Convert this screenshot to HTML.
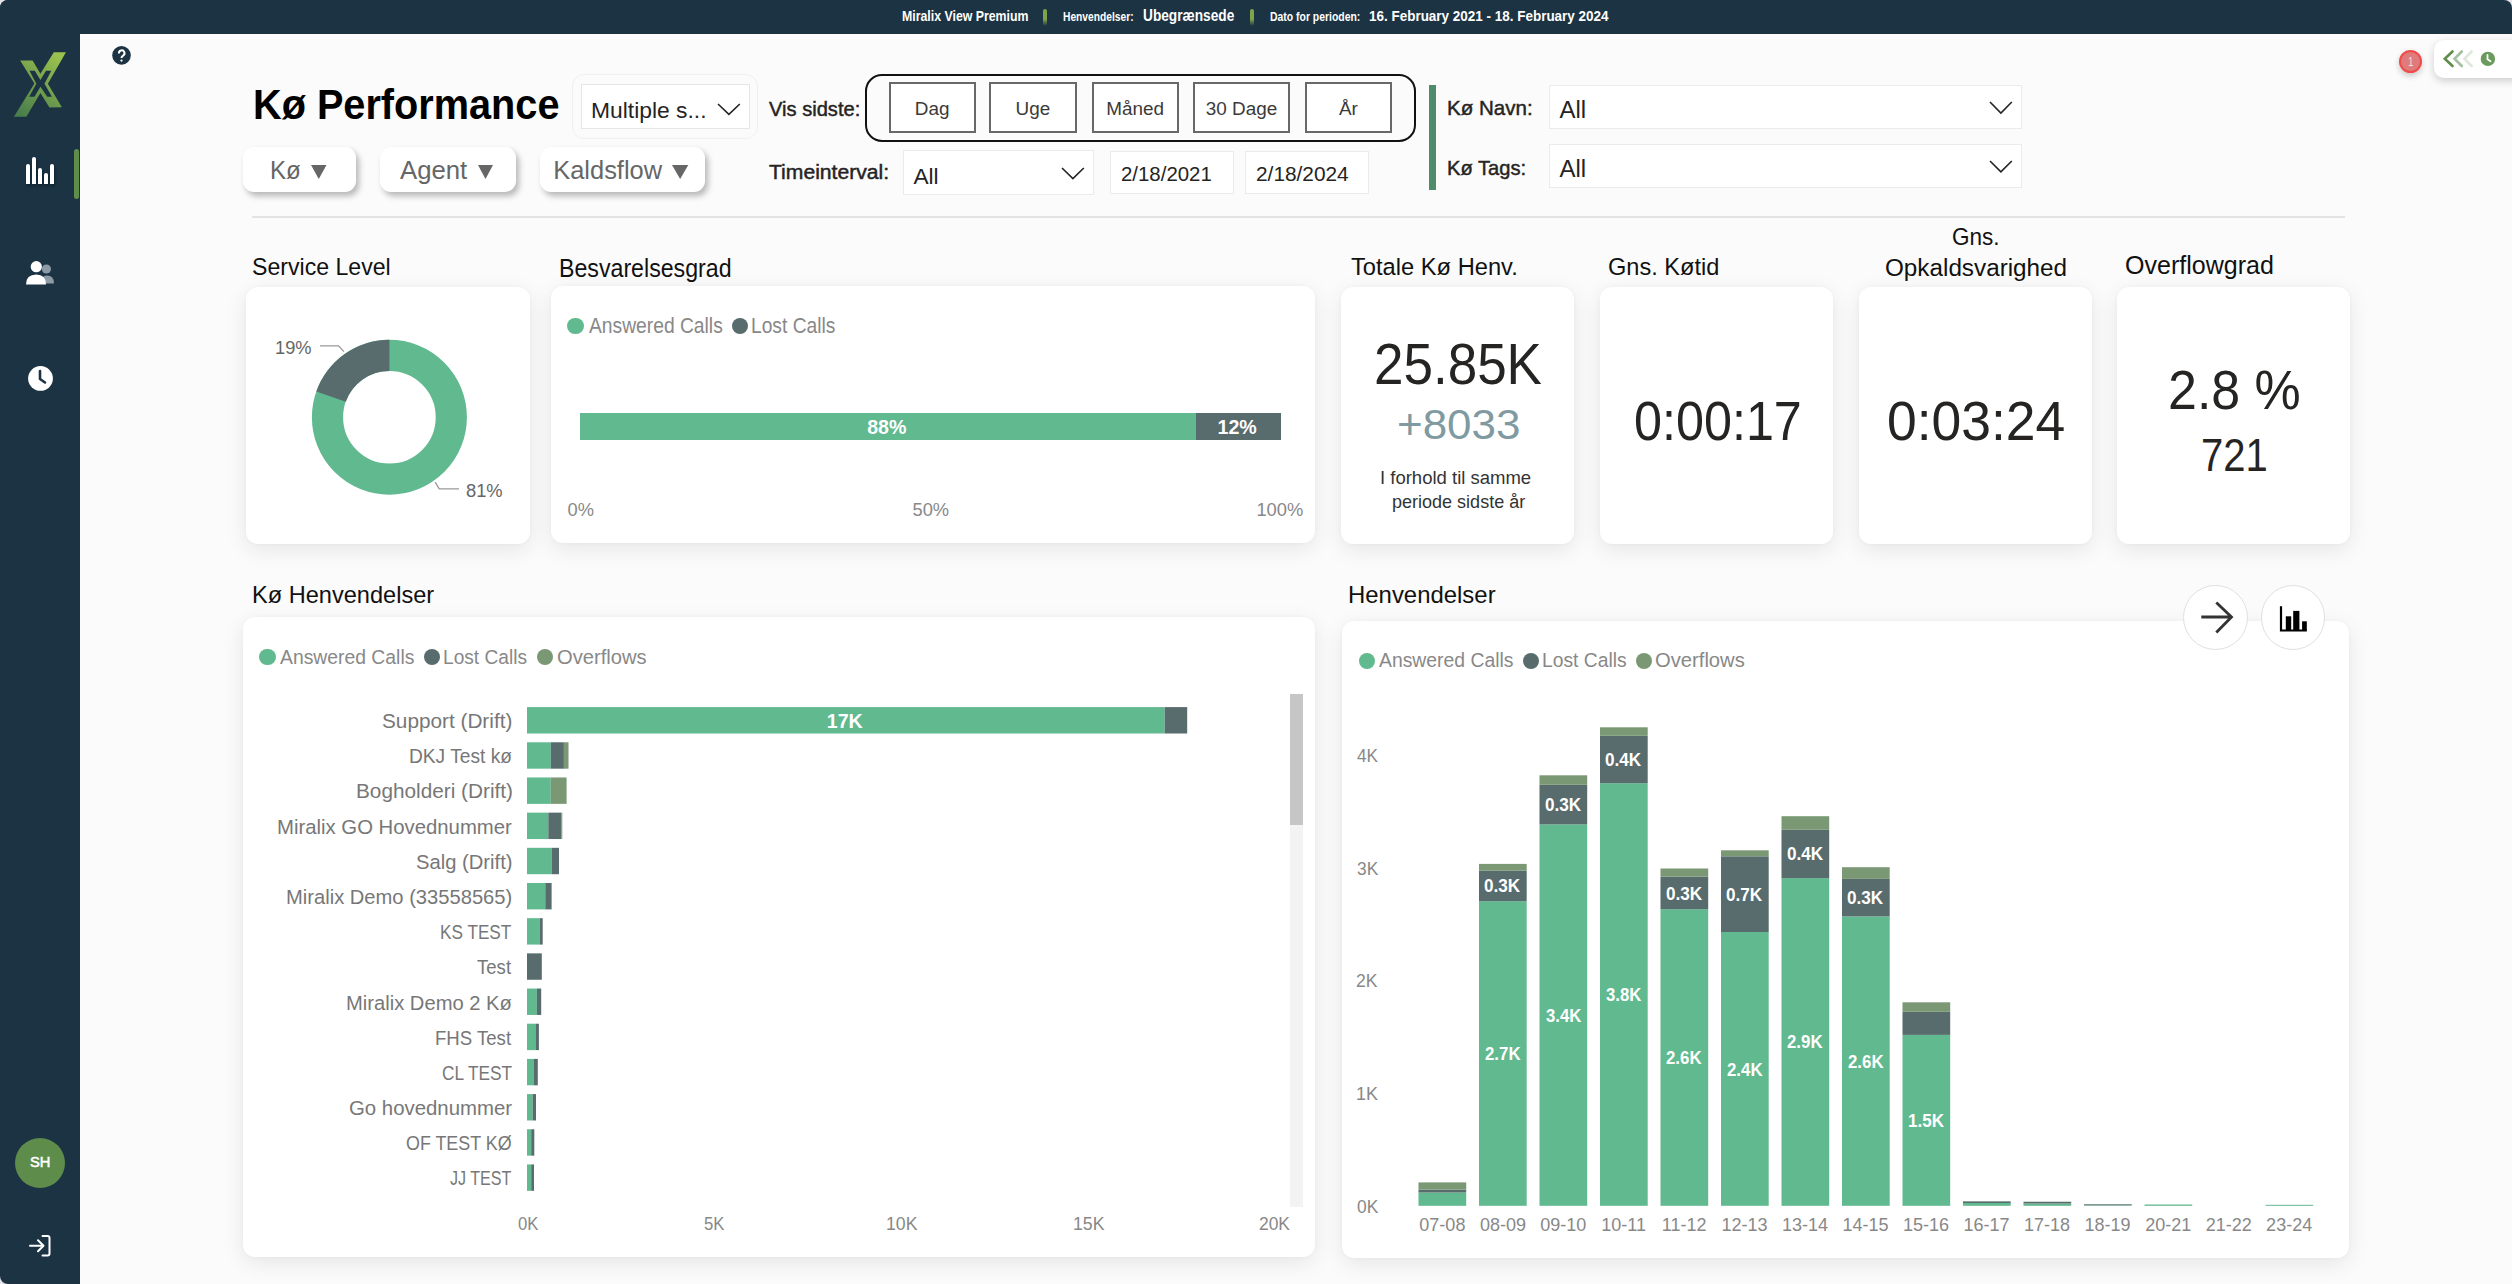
<!DOCTYPE html><html><head><meta charset="utf-8"><style>
html,body{margin:0;padding:0;}
body{width:2512px;height:1284px;position:relative;overflow:hidden;background:#e4e4e6;font-family:"Liberation Sans",sans-serif;}
.t{position:absolute;white-space:nowrap;line-height:1;transform-origin:0 0;z-index:2;}
.r{position:absolute;box-sizing:border-box;}
svg{position:absolute;overflow:visible;}
</style></head><body>
<div class="r" style="left:80.00px;top:34.00px;width:2432.00px;height:1250.00px;background:#fbfbfb;"></div>
<div class="r" style="left:0.00px;top:0.00px;width:2512.00px;height:34.00px;background:#1c3343;border-radius:8px 8px 0 0;"></div>
<div class="r" style="left:0.00px;top:0.00px;width:80.00px;height:1284.00px;background:#1c3343;border-radius:8px 0 0 8px;"></div>
<div class="t" style="left:902.17px;top:10.00px;font-size:13.81px;font-weight:bold;color:#fff;transform:scaleX(0.8932);">Miralix View Premium</div>
<div class="r" style="left:1043.00px;top:9.00px;width:4.00px;height:17.00px;background:linear-gradient(#7fa24a,#7fa24a 60%,rgba(127,162,74,0));border-radius:2px;"></div>
<div class="t" style="left:1063.31px;top:11.20px;font-size:12.35px;font-weight:bold;color:#fff;transform:scaleX(0.8300);">Henvendelser:</div>
<div class="t" style="left:1143.18px;top:8.00px;font-size:15.99px;font-weight:bold;color:#fff;transform:scaleX(0.8563);">Ubegrænsede</div>
<div class="r" style="left:1250.00px;top:9.00px;width:4.00px;height:17.00px;background:linear-gradient(#7fa24a,#7fa24a 60%,rgba(127,162,74,0));border-radius:2px;"></div>
<div class="t" style="left:1269.60px;top:11.20px;font-size:12.35px;font-weight:bold;color:#fff;transform:scaleX(0.8442);">Dato for perioden:</div>
<div class="t" style="left:1368.95px;top:8.20px;font-size:15.41px;font-weight:bold;color:#fff;transform:scaleX(0.8740);">16. February 2021 - 18. February 2024</div>
<svg style="left:8px;top:45px" width="64" height="80" viewBox="0 0 1027 1284">
<defs><linearGradient id="lg" x1="0.8" y1="0" x2="0.2" y2="1"><stop offset="0" stop-color="#9cc24e"/><stop offset="1" stop-color="#4a7f4c"/></linearGradient></defs>
<path fill="url(#lg)" fill-rule="evenodd" d="M195 250 L395 250 L520 460 L735 115 L930 115 L640 620 L865 1000 L665 1005 L520 770 L295 1150 L95 1150 L424 618 Z
M345 415 L430 415 L520 560 L610 415 L695 415 L585 620 L705 830 L630 830 L520 670 L425 830 L340 830 L455 620 Z"/></svg>
<div class="r" style="left:26.00px;top:163.80px;width:4.00px;height:20.20px;background:#fff;border-radius:2px 2px 0 0;box-shadow:1px 2px 3px rgba(0,0,0,0.35);"></div>
<div class="r" style="left:32.00px;top:157.00px;width:4.00px;height:27.00px;background:#fff;border-radius:2px 2px 0 0;box-shadow:1px 2px 3px rgba(0,0,0,0.35);"></div>
<div class="r" style="left:38.00px;top:167.80px;width:4.00px;height:16.20px;background:#fff;border-radius:2px 2px 0 0;box-shadow:1px 2px 3px rgba(0,0,0,0.35);"></div>
<div class="r" style="left:44.00px;top:172.90px;width:4.00px;height:11.10px;background:#fff;border-radius:2px 2px 0 0;box-shadow:1px 2px 3px rgba(0,0,0,0.35);"></div>
<div class="r" style="left:50.00px;top:163.80px;width:4.00px;height:20.20px;background:#fff;border-radius:2px 2px 0 0;box-shadow:1px 2px 3px rgba(0,0,0,0.35);"></div>
<div class="r" style="left:74.00px;top:149.00px;width:5.00px;height:50.00px;background:#5e8e4a;border-radius:3px;"></div>
<svg style="left:20px;top:255px" width="40" height="35" viewBox="0 0 40 35">
<circle cx="26.4" cy="14" r="4.6" fill="#8c9ba5"/>
<path d="M21 28.5 Q21 20.5 27 20.5 Q34 20.5 34 28.5 Z" fill="#8c9ba5"/>
<circle cx="16.3" cy="11.7" r="5.6" fill="#fff"/>
<path d="M6 29.5 Q6 19.5 16.3 19.5 Q26 19.5 26 29.5 Z" fill="#fff"/>
</svg>
<svg style="left:20px;top:358px" width="40" height="40" viewBox="0 0 40 40">
<circle cx="20.5" cy="20.4" r="12.4" fill="#fff"/>
<path d="M20 13 L20 21 L25 24.5" stroke="#1c3343" stroke-width="2.6" fill="none" stroke-linecap="round" stroke-linejoin="round"/>
</svg>
<div class="r" style="left:15px;top:1138px;width:50px;height:50px;border-radius:50%;background:#5e8d4b;"></div>
<div class="t" style="left:30.04px;top:1155.00px;font-size:14.53px;font-weight:normal;color:#fff;transform:scaleX(1.0132);-webkit-text-stroke:0.5px #fff;">SH</div>
<svg style="left:26px;top:1232px" width="30" height="28" viewBox="0 0 30 28">
<path d="M4 13.8 L17.5 13.8 M12 8.3 L17.5 13.8 L12 19.3" stroke="#fff" stroke-width="2" fill="none" stroke-linecap="round" stroke-linejoin="round"/>
<path d="M16.5 4 L21.5 4 Q23.5 4 23.5 6 L23.5 21.5 Q23.5 23.5 21.5 23.5 L16.5 23.5" stroke="#fff" stroke-width="2" fill="none" stroke-linecap="round"/>
</svg>
<svg style="left:100px;top:35px" width="50" height="40" viewBox="100 35 50 40">
<circle cx="121.5" cy="55.4" r="9.3" fill="#1c3343"/>
<path d="M118.9 53.5 A2.8 2.8 0 1 1 123.1 55.6 Q121.5 56.5 121.5 57.9" stroke="#fff" stroke-width="2" fill="none"/>
<circle cx="121.5" cy="60.6" r="1.15" fill="#fff"/>
</svg>
<div class="r" style="left:2399px;top:50.3px;width:23px;height:23px;border-radius:50%;background:#e07b7b;border:2px solid #f04a4a;box-shadow:0 3px 6px rgba(0,0,0,0.2);"></div>
<div class="t" style="left:2407.96px;top:54.80px;font-size:13.66px;font-weight:normal;color:#f8dede;transform:scaleX(0.7132);">1</div>
<div class="r" style="left:2434.00px;top:40.00px;width:100.00px;height:37.50px;background:#fff;border-radius:10px;box-shadow:0 3px 8px rgba(0,0,0,0.18);"></div>
<svg style="left:2440px;top:48px" width="60" height="22" viewBox="0 0 60 22">
<path d="M12.5 3.5 L4.8 10.8 L12.5 18" stroke="#5e8e4a" stroke-width="2.6" fill="none" stroke-linecap="round"/>
<path d="M21.8 3.5 L14.5 10.8 L21.8 18" stroke="#a3c0a0" stroke-width="2.6" fill="none" stroke-linecap="round"/>
<path d="M31.6 3.5 L24.5 10.8 L31.6 18" stroke="#dce8da" stroke-width="2.6" fill="none" stroke-linecap="round"/>
<circle cx="47.9" cy="10.9" r="7.2" fill="#6a9a5c"/>
<path d="M47.5 6.8 L47.5 11.2 L50.5 13.2" stroke="#fff" stroke-width="1.8" fill="none" stroke-linecap="round"/>
</svg>
<div class="t" style="left:252.84px;top:83.70px;font-size:42.15px;font-weight:bold;color:#000;transform:scaleX(0.9414);">Kø Performance</div>
<div class="r" style="left:572.00px;top:74.00px;width:186.00px;height:65.00px;border:1px solid #f0f0f0;border-radius:12px;"></div>
<div class="r" style="left:581.20px;top:84.20px;width:168.70px;height:45.30px;background:#fff;border:1.5px solid #e6e6e6;"></div>
<div class="t" style="left:590.82px;top:98.50px;font-size:22.67px;font-weight:normal;color:#252423;transform:scaleX(1.0087);">Multiple s...</div>
<svg style="left:715.50px;top:101.50px" width="25.80" height="14.30"><path d="M2 2 L12.90 12.30 L23.80 2" stroke="#252423" stroke-width="1.6" fill="none"/></svg>
<div class="t" style="left:768.52px;top:99.30px;font-size:20.35px;font-weight:normal;color:#252423;transform:scaleX(0.9886);-webkit-text-stroke:0.45px #252423;">Vis sidste:</div>
<div class="r" style="left:865.00px;top:74.20px;width:550.50px;height:68.30px;border:2px solid #111;border-radius:17px;"></div>
<div class="r" style="left:888.50px;top:82.30px;width:87.70px;height:50.50px;background:#fff;border:2px solid #6a6866;"></div>
<div class="t" style="left:914.85px;top:100.00px;font-size:18.90px;font-weight:normal;color:#3b3a39;">Dag</div>
<div class="r" style="left:989.40px;top:82.30px;width:87.60px;height:50.50px;background:#fff;border:2px solid #6a6866;"></div>
<div class="t" style="left:1015.56px;top:100.00px;font-size:18.90px;font-weight:normal;color:#3b3a39;">Uge</div>
<div class="r" style="left:1091.70px;top:82.30px;width:87.30px;height:50.50px;background:#fff;border:2px solid #6a6866;"></div>
<div class="t" style="left:1106.30px;top:100.00px;font-size:18.90px;font-weight:normal;color:#3b3a39;">Måned</div>
<div class="r" style="left:1192.80px;top:82.30px;width:97.40px;height:50.50px;background:#fff;border:2px solid #6a6866;"></div>
<div class="t" style="left:1205.84px;top:100.00px;font-size:18.90px;font-weight:normal;color:#3b3a39;">30 Dage</div>
<div class="r" style="left:1304.50px;top:82.30px;width:87.40px;height:50.50px;background:#fff;border:2px solid #6a6866;"></div>
<div class="t" style="left:1338.88px;top:100.00px;font-size:18.90px;font-weight:normal;color:#3b3a39;">År</div>
<div class="r" style="left:1429.00px;top:85.20px;width:6.80px;height:104.50px;background:#4e8c6c;"></div>
<div class="t" style="left:1446.71px;top:98.40px;font-size:20.93px;font-weight:normal;color:#252423;transform:scaleX(0.9819);-webkit-text-stroke:0.45px #252423;">Kø Navn:</div>
<div class="r" style="left:1549.30px;top:84.60px;width:472.50px;height:44.20px;background:#fff;border:1.5px solid #ebebeb;"></div>
<div class="t" style="left:1559.45px;top:98.00px;font-size:23.98px;font-weight:normal;color:#252423;">All</div>
<svg style="left:1988.00px;top:99.80px" width="25.80" height="15.10"><path d="M2 2 L12.90 13.10 L23.80 2" stroke="#252423" stroke-width="1.6" fill="none"/></svg>
<div class="t" style="left:1446.75px;top:158.10px;font-size:20.93px;font-weight:normal;color:#252423;transform:scaleX(0.9619);-webkit-text-stroke:0.45px #252423;">Kø Tags:</div>
<div class="r" style="left:1549.30px;top:143.70px;width:472.50px;height:44.20px;background:#fff;border:1.5px solid #ebebeb;"></div>
<div class="t" style="left:1559.45px;top:157.20px;font-size:23.98px;font-weight:normal;color:#252423;">All</div>
<svg style="left:1988.00px;top:159.20px" width="25.80" height="14.90"><path d="M2 2 L12.90 12.90 L23.80 2" stroke="#252423" stroke-width="1.6" fill="none"/></svg>
<div class="r" style="left:243.40px;top:147.40px;width:113.00px;height:45.00px;background:#fff;border-radius:11px;box-shadow:3px 4px 6px rgba(0,0,0,0.28);"></div>
<div class="t" style="left:270.22px;top:157.80px;font-size:25.44px;font-weight:normal;color:#666666;transform:scaleX(0.9485);">Kø</div>
<svg style="left:310.70px;top:165px" width="15.50" height="14"><path d="M0 0 L15.50 0 L7.75 14 Z" fill="#666"/></svg>
<div class="r" style="left:380.30px;top:147.40px;width:135.30px;height:45.00px;background:#fff;border-radius:11px;box-shadow:3px 4px 6px rgba(0,0,0,0.28);"></div>
<div class="t" style="left:399.95px;top:157.80px;font-size:25.44px;font-weight:normal;color:#666666;transform:scaleX(1.0115);">Agent</div>
<svg style="left:478.00px;top:165px" width="15.00" height="14"><path d="M0 0 L15.00 0 L7.50 14 Z" fill="#666"/></svg>
<div class="r" style="left:540.30px;top:147.40px;width:164.50px;height:45.00px;background:#fff;border-radius:11px;box-shadow:3px 4px 6px rgba(0,0,0,0.28);"></div>
<div class="t" style="left:553.22px;top:157.80px;font-size:25.44px;font-weight:normal;color:#666666;">Kaldsflow</div>
<svg style="left:672.00px;top:165px" width="16.30" height="14"><path d="M0 0 L16.30 0 L8.15 14 Z" fill="#666"/></svg>
<div class="t" style="left:768.84px;top:162.00px;font-size:20.35px;font-weight:normal;color:#252423;transform:scaleX(1.0386);-webkit-text-stroke:0.45px #252423;">Timeinterval:</div>
<div class="r" style="left:903.20px;top:150.10px;width:190.40px;height:44.90px;background:#fff;border:1.5px solid #ebebeb;"></div>
<div class="t" style="left:913.45px;top:164.90px;font-size:22.67px;font-weight:normal;color:#252423;">All</div>
<svg style="left:1060.00px;top:166.40px" width="25.80" height="14.60"><path d="M2 2 L12.90 12.60 L23.80 2" stroke="#252423" stroke-width="1.6" fill="none"/></svg>
<div class="r" style="left:1110.10px;top:151.30px;width:124.30px;height:42.90px;background:#fff;border:1.5px solid #ebebeb;"></div>
<div class="t" style="left:1121.18px;top:165.00px;font-size:19.91px;font-weight:normal;color:#252423;transform:scaleX(1.0252);">2/18/2021</div>
<div class="r" style="left:1245.10px;top:151.30px;width:124.40px;height:42.90px;background:#fff;border:1.5px solid #ebebeb;"></div>
<div class="t" style="left:1256.36px;top:165.00px;font-size:19.91px;font-weight:normal;color:#252423;transform:scaleX(1.0469);">2/18/2024</div>
<div class="r" style="left:252.00px;top:216.00px;width:2092.50px;height:1.60px;background:#e3e3e3;"></div>
<div class="t" style="left:252.36px;top:255.00px;font-size:24.71px;font-weight:normal;color:#111111;transform:scaleX(0.9357);">Service Level</div>
<div class="t" style="left:558.50px;top:255.60px;font-size:25.15px;font-weight:normal;color:#111111;transform:scaleX(0.9215);">Besvarelsesgrad</div>
<div class="t" style="left:1351.48px;top:255.00px;font-size:24.13px;font-weight:normal;color:#111111;transform:scaleX(0.9818);">Totale Kø Henv.</div>
<div class="t" style="left:1608.12px;top:255.00px;font-size:24.13px;font-weight:normal;color:#111111;transform:scaleX(0.9766);">Gns. Køtid</div>
<div class="t" style="left:1952.17px;top:226.20px;font-size:23.11px;font-weight:normal;color:#111111;transform:scaleX(0.9747);">Gns.</div>
<div class="t" style="left:1884.56px;top:256.10px;font-size:24.56px;font-weight:normal;color:#111111;transform:scaleX(0.9884);">Opkaldsvarighed</div>
<div class="t" style="left:2124.92px;top:253.30px;font-size:25.15px;font-weight:normal;color:#111111;transform:scaleX(0.9963);">Overflowgrad</div>
<div class="r" style="left:246.00px;top:287.00px;width:283.50px;height:256.50px;background:#fff;border-radius:12px;box-shadow:0 6px 22px rgba(0,0,0,0.085), 0 0 4px rgba(0,0,0,0.03);"></div>
<div class="r" style="left:551.00px;top:286.00px;width:763.50px;height:256.50px;background:#fff;border-radius:12px;box-shadow:0 6px 22px rgba(0,0,0,0.085), 0 0 4px rgba(0,0,0,0.03);"></div>
<div class="r" style="left:1341.10px;top:287.00px;width:233.00px;height:256.50px;background:#fff;border-radius:12px;box-shadow:0 6px 22px rgba(0,0,0,0.085), 0 0 4px rgba(0,0,0,0.03);"></div>
<div class="r" style="left:1600.00px;top:287.00px;width:233.00px;height:256.50px;background:#fff;border-radius:12px;box-shadow:0 6px 22px rgba(0,0,0,0.085), 0 0 4px rgba(0,0,0,0.03);"></div>
<div class="r" style="left:1859.30px;top:287.00px;width:232.50px;height:256.50px;background:#fff;border-radius:12px;box-shadow:0 6px 22px rgba(0,0,0,0.085), 0 0 4px rgba(0,0,0,0.03);"></div>
<div class="r" style="left:2117.40px;top:287.00px;width:232.50px;height:256.50px;background:#fff;border-radius:12px;box-shadow:0 6px 22px rgba(0,0,0,0.085), 0 0 4px rgba(0,0,0,0.03);"></div>
<svg style="left:0;top:0" width="2512" height="1284" viewBox="0 0 2512 1284">
<circle cx="389.4" cy="417.3" r="61.9" stroke="#61b98f" stroke-width="31.200000000000003" fill="none"/>
<path d="M389.40 339.80 A77.5 77.5 0 0 0 316.35 391.43 L345.76 401.84 A46.3 46.3 0 0 1 389.40 371.00 Z" fill="#586b6d"/>
<path d="M320 345.8 L338.6 345.8 L343.9 351.6" stroke="#999" stroke-width="1.3" fill="none"/>
<path d="M435.2 482.2 L439.2 488.8 L459 488.8" stroke="#999" stroke-width="1.3" fill="none"/>
</svg>
<div class="t" style="left:274.91px;top:337.70px;font-size:19.19px;font-weight:normal;color:#666;transform:scaleX(0.9514);">19%</div>
<div class="t" style="left:466.21px;top:480.70px;font-size:19.19px;font-weight:normal;color:#666;transform:scaleX(0.9541);">81%</div>
<div class="r" style="left:567.30px;top:317.80px;width:16.4px;height:16.4px;border-radius:50%;background:#61b98f;"></div>
<div class="t" style="left:588.66px;top:316.20px;font-size:21.51px;font-weight:normal;color:#888888;transform:scaleX(0.8955);">Answered Calls</div>
<div class="r" style="left:731.50px;top:317.80px;width:16.4px;height:16.4px;border-radius:50%;background:#586b6d;"></div>
<div class="t" style="left:751.32px;top:316.20px;font-size:21.51px;font-weight:normal;color:#888888;transform:scaleX(0.8932);">Lost Calls</div>
<div class="r" style="left:579.60px;top:412.80px;width:616.10px;height:27.30px;background:#61b98f;"></div>
<div class="r" style="left:1195.70px;top:412.80px;width:85.20px;height:27.30px;background:#586b6d;"></div>
<div class="t" style="left:867.21px;top:417.80px;font-size:19.62px;font-weight:bold;color:#fff;">88%</div>
<div class="t" style="left:1217.51px;top:417.80px;font-size:19.62px;font-weight:bold;color:#fff;">12%</div>
<div class="t" style="left:567.59px;top:500.60px;font-size:18.31px;font-weight:normal;color:#888;">0%</div>
<div class="t" style="left:912.53px;top:500.60px;font-size:18.31px;font-weight:normal;color:#888;">50%</div>
<div class="t" style="left:1256.41px;top:500.60px;font-size:18.31px;font-weight:normal;color:#888;">100%</div>
<div class="t" style="left:1374.45px;top:335.60px;font-size:57.70px;font-weight:normal;color:#252423;transform:scaleX(0.9187);">25.85K</div>
<div class="t" style="left:1397.25px;top:403.00px;font-size:43.17px;font-weight:normal;color:#7f9aa1;transform:scaleX(1.0187);">+8033</div>
<div class="t" style="left:1379.90px;top:469.20px;font-size:18.46px;font-weight:normal;color:#333;transform:scaleX(1.0035);">I forhold til samme</div>
<div class="t" style="left:1391.55px;top:493.10px;font-size:18.46px;font-weight:normal;color:#333;transform:scaleX(0.9771);">periode sidste år</div>
<div class="t" style="left:1633.84px;top:392.80px;font-size:55.81px;font-weight:normal;color:#252423;transform:scaleX(0.9016);">0:00:17</div>
<div class="t" style="left:1887.12px;top:392.70px;font-size:55.81px;font-weight:normal;color:#252423;transform:scaleX(0.9578);">0:03:24</div>
<div class="t" style="left:2167.80px;top:362.30px;font-size:55.81px;font-weight:normal;color:#252423;transform:scaleX(0.9306);">2.8 %</div>
<div class="t" style="left:2201.46px;top:432.00px;font-size:46.22px;font-weight:normal;color:#252423;transform:scaleX(0.8651);">721</div>
<div class="t" style="left:252.07px;top:583.30px;font-size:23.84px;font-weight:normal;color:#111111;transform:scaleX(0.9894);">Kø Henvendelser</div>
<div class="r" style="left:243.00px;top:617.00px;width:1071.50px;height:640.00px;background:#fff;border-radius:12px;box-shadow:0 6px 22px rgba(0,0,0,0.085), 0 0 4px rgba(0,0,0,0.03);"></div>
<div class="r" style="left:259.40px;top:649.00px;width:16.4px;height:16.4px;border-radius:50%;background:#61b98f;"></div>
<div class="t" style="left:280.36px;top:646.00px;font-size:21.08px;font-weight:normal;color:#888888;transform:scaleX(0.9175);">Answered Calls</div>
<div class="r" style="left:423.50px;top:649.00px;width:16.4px;height:16.4px;border-radius:50%;background:#586b6d;"></div>
<div class="t" style="left:443.23px;top:646.00px;font-size:21.08px;font-weight:normal;color:#888888;transform:scaleX(0.9072);">Lost Calls</div>
<div class="r" style="left:536.60px;top:649.00px;width:16.4px;height:16.4px;border-radius:50%;background:#7a9874;"></div>
<div class="t" style="left:556.65px;top:646.00px;font-size:21.08px;font-weight:normal;color:#888888;transform:scaleX(0.9572);">Overflows</div>
<div class="t" style="left:382.27px;top:710.10px;font-size:21.08px;font-weight:normal;color:#777777;transform:scaleX(0.9848);">Support (Drift)</div>
<div class="t" style="left:408.83px;top:745.28px;font-size:21.08px;font-weight:normal;color:#777777;transform:scaleX(0.9090);">DKJ Test kø</div>
<div class="t" style="left:355.60px;top:780.46px;font-size:21.08px;font-weight:normal;color:#777777;transform:scaleX(0.9856);">Bogholderi (Drift)</div>
<div class="t" style="left:276.83px;top:815.64px;font-size:21.08px;font-weight:normal;color:#777777;transform:scaleX(0.9639);">Miralix GO Hovednummer</div>
<div class="t" style="left:416.09px;top:850.82px;font-size:21.08px;font-weight:normal;color:#777777;transform:scaleX(0.9579);">Salg (Drift)</div>
<div class="t" style="left:286.35px;top:886.00px;font-size:21.08px;font-weight:normal;color:#777777;transform:scaleX(0.9560);">Miralix Demo (33558565)</div>
<div class="t" style="left:440.39px;top:921.18px;font-size:21.08px;font-weight:normal;color:#777777;transform:scaleX(0.8152);">KS TEST</div>
<div class="t" style="left:477.39px;top:956.36px;font-size:21.08px;font-weight:normal;color:#777777;transform:scaleX(0.8806);">Test</div>
<div class="t" style="left:345.95px;top:991.54px;font-size:21.08px;font-weight:normal;color:#777777;transform:scaleX(0.9567);">Miralix Demo 2 Kø</div>
<div class="t" style="left:435.38px;top:1026.72px;font-size:21.08px;font-weight:normal;color:#777777;transform:scaleX(0.8814);">FHS Test</div>
<div class="t" style="left:441.52px;top:1061.90px;font-size:21.08px;font-weight:normal;color:#777777;transform:scaleX(0.8208);">CL TEST</div>
<div class="t" style="left:348.58px;top:1097.08px;font-size:21.08px;font-weight:normal;color:#777777;transform:scaleX(0.9665);">Go hovednummer</div>
<div class="t" style="left:406.36px;top:1132.26px;font-size:21.08px;font-weight:normal;color:#777777;transform:scaleX(0.8475);">OF TEST KØ</div>
<div class="t" style="left:450.24px;top:1167.44px;font-size:21.08px;font-weight:normal;color:#777777;transform:scaleX(0.7638);">JJ TEST</div>
<div class="t" style="left:826.78px;top:712.30px;font-size:19.62px;font-weight:bold;color:#fff;">17K</div>
<div class="t" style="left:517.55px;top:1215.00px;font-size:18.90px;font-weight:normal;color:#888;transform:scaleX(0.8851);">0K</div>
<div class="t" style="left:704.23px;top:1215.00px;font-size:18.90px;font-weight:normal;color:#888;transform:scaleX(0.8858);">5K</div>
<div class="t" style="left:885.51px;top:1215.00px;font-size:18.90px;font-weight:normal;color:#888;transform:scaleX(0.9358);">10K</div>
<div class="t" style="left:1072.51px;top:1215.00px;font-size:18.90px;font-weight:normal;color:#888;transform:scaleX(0.9358);">15K</div>
<div class="t" style="left:1259.28px;top:1215.00px;font-size:18.90px;font-weight:normal;color:#888;transform:scaleX(0.9216);">20K</div>
<div class="r" style="left:1290.10px;top:693.80px;width:12.90px;height:513.30px;background:#f3f3f3;"></div>
<div class="r" style="left:1290.10px;top:693.80px;width:12.90px;height:131.00px;background:#c6c6c6;"></div>
<div class="t" style="left:1347.64px;top:583.30px;font-size:23.84px;font-weight:normal;color:#111111;transform:scaleX(1.0039);">Henvendelser</div>
<div class="r" style="left:1342.30px;top:621.00px;width:1006.70px;height:636.50px;background:#fff;border-radius:12px;box-shadow:0 6px 22px rgba(0,0,0,0.085), 0 0 4px rgba(0,0,0,0.03);"></div>
<div class="r" style="left:1358.60px;top:652.60px;width:16.4px;height:16.4px;border-radius:50%;background:#61b98f;"></div>
<div class="t" style="left:1378.96px;top:649.30px;font-size:21.08px;font-weight:normal;color:#888888;transform:scaleX(0.9182);">Answered Calls</div>
<div class="r" style="left:1522.70px;top:652.60px;width:16.4px;height:16.4px;border-radius:50%;background:#586b6d;"></div>
<div class="t" style="left:1541.92px;top:649.30px;font-size:21.08px;font-weight:normal;color:#888888;transform:scaleX(0.9139);">Lost Calls</div>
<div class="r" style="left:1635.80px;top:652.60px;width:16.4px;height:16.4px;border-radius:50%;background:#7a9874;"></div>
<div class="t" style="left:1655.35px;top:649.30px;font-size:21.08px;font-weight:normal;color:#888888;transform:scaleX(0.9583);">Overflows</div>
<div class="t" style="left:1356.91px;top:747.20px;font-size:18.60px;font-weight:normal;color:#888;transform:scaleX(0.9230);">4K</div>
<div class="t" style="left:1356.64px;top:859.80px;font-size:18.60px;font-weight:normal;color:#888;transform:scaleX(0.9348);">3K</div>
<div class="t" style="left:1356.42px;top:971.50px;font-size:18.60px;font-weight:normal;color:#888;transform:scaleX(0.9444);">2K</div>
<div class="t" style="left:1355.93px;top:1084.70px;font-size:18.60px;font-weight:normal;color:#888;transform:scaleX(0.9661);">1K</div>
<div class="t" style="left:1356.62px;top:1197.70px;font-size:18.60px;font-weight:normal;color:#888;transform:scaleX(0.9356);">0K</div>
<div class="t" style="left:1419.34px;top:1215.80px;font-size:18.02px;font-weight:normal;color:#888;">07-08</div>
<div class="t" style="left:1479.88px;top:1215.80px;font-size:18.02px;font-weight:normal;color:#888;">08-09</div>
<div class="t" style="left:1484.48px;top:876.70px;font-size:18.90px;font-weight:bold;color:#fff;transform:scaleX(0.9077);">0.3K</div>
<div class="t" style="left:1484.86px;top:1044.90px;font-size:18.90px;font-weight:bold;color:#fff;transform:scaleX(0.8906);">2.7K</div>
<div class="t" style="left:1540.31px;top:1215.80px;font-size:18.02px;font-weight:normal;color:#888;">09-10</div>
<div class="t" style="left:1544.98px;top:795.50px;font-size:18.90px;font-weight:bold;color:#fff;transform:scaleX(0.9077);">0.3K</div>
<div class="t" style="left:1545.57px;top:1006.90px;font-size:18.90px;font-weight:bold;color:#fff;transform:scaleX(0.8854);">3.4K</div>
<div class="t" style="left:1601.23px;top:1215.80px;font-size:18.02px;font-weight:normal;color:#888;">10-11</div>
<div class="t" style="left:1605.48px;top:750.70px;font-size:18.90px;font-weight:bold;color:#fff;transform:scaleX(0.9077);">0.4K</div>
<div class="t" style="left:1606.07px;top:985.90px;font-size:18.90px;font-weight:bold;color:#fff;transform:scaleX(0.8854);">3.8K</div>
<div class="t" style="left:1661.74px;top:1215.80px;font-size:18.02px;font-weight:normal;color:#888;">11-12</div>
<div class="t" style="left:1665.98px;top:884.90px;font-size:18.90px;font-weight:bold;color:#fff;transform:scaleX(0.9077);">0.3K</div>
<div class="t" style="left:1666.36px;top:1048.70px;font-size:18.90px;font-weight:bold;color:#fff;transform:scaleX(0.8906);">2.6K</div>
<div class="t" style="left:1721.52px;top:1215.80px;font-size:18.02px;font-weight:normal;color:#888;">12-13</div>
<div class="t" style="left:1726.48px;top:886.20px;font-size:18.90px;font-weight:bold;color:#fff;transform:scaleX(0.9077);">0.7K</div>
<div class="t" style="left:1726.86px;top:1060.80px;font-size:18.90px;font-weight:bold;color:#fff;transform:scaleX(0.8906);">2.4K</div>
<div class="t" style="left:1781.88px;top:1215.80px;font-size:18.02px;font-weight:normal;color:#888;">13-14</div>
<div class="t" style="left:1786.98px;top:844.50px;font-size:18.90px;font-weight:bold;color:#fff;transform:scaleX(0.9077);">0.4K</div>
<div class="t" style="left:1787.36px;top:1032.80px;font-size:18.90px;font-weight:bold;color:#fff;transform:scaleX(0.8906);">2.9K</div>
<div class="t" style="left:1842.50px;top:1215.80px;font-size:18.02px;font-weight:normal;color:#888;">14-15</div>
<div class="t" style="left:1847.48px;top:889.00px;font-size:18.90px;font-weight:bold;color:#fff;transform:scaleX(0.9077);">0.3K</div>
<div class="t" style="left:1847.86px;top:1052.70px;font-size:18.90px;font-weight:bold;color:#fff;transform:scaleX(0.8906);">2.6K</div>
<div class="t" style="left:1903.02px;top:1215.80px;font-size:18.02px;font-weight:normal;color:#888;">15-16</div>
<div class="t" style="left:1907.88px;top:1112.10px;font-size:18.90px;font-weight:bold;color:#fff;transform:scaleX(0.9028);">1.5K</div>
<div class="t" style="left:1963.57px;top:1215.80px;font-size:18.02px;font-weight:normal;color:#888;">16-17</div>
<div class="t" style="left:2024.01px;top:1215.80px;font-size:18.02px;font-weight:normal;color:#888;">17-18</div>
<div class="t" style="left:2084.55px;top:1215.80px;font-size:18.02px;font-weight:normal;color:#888;">18-19</div>
<div class="t" style="left:2145.30px;top:1215.80px;font-size:18.02px;font-weight:normal;color:#888;">20-21</div>
<div class="t" style="left:2205.81px;top:1215.80px;font-size:18.02px;font-weight:normal;color:#888;">21-22</div>
<div class="t" style="left:2266.12px;top:1215.80px;font-size:18.02px;font-weight:normal;color:#888;">23-24</div>
<svg style="left:0;top:0;z-index:0" width="2512" height="1284" viewBox="0 0 2512 1284"><rect x="527.00" y="707.10" width="637.70" height="26.40" fill="#61b98f"/><rect x="1164.70" y="707.10" width="22.50" height="26.40" fill="#586b6d"/><rect x="527.00" y="742.28" width="23.80" height="26.40" fill="#61b98f"/><rect x="550.80" y="742.28" width="13.10" height="26.40" fill="#586b6d"/><rect x="563.90" y="742.28" width="4.60" height="26.40" fill="#7a9874"/><rect x="527.00" y="777.46" width="23.80" height="26.40" fill="#61b98f"/><rect x="550.80" y="777.46" width="15.80" height="26.40" fill="#7a9874"/><rect x="527.00" y="812.64" width="21.30" height="26.40" fill="#61b98f"/><rect x="548.30" y="812.64" width="12.90" height="26.40" fill="#586b6d"/><rect x="561.20" y="812.64" width="1.10" height="26.40" fill="#7a9874"/><rect x="527.00" y="847.82" width="24.60" height="26.40" fill="#61b98f"/><rect x="551.60" y="847.82" width="7.40" height="26.40" fill="#586b6d"/><rect x="527.00" y="883.00" width="18.30" height="26.40" fill="#61b98f"/><rect x="545.30" y="883.00" width="6.30" height="26.40" fill="#586b6d"/><rect x="527.00" y="918.18" width="12.80" height="26.40" fill="#61b98f"/><rect x="539.80" y="918.18" width="2.90" height="26.40" fill="#586b6d"/><rect x="527.00" y="953.36" width="14.80" height="26.40" fill="#586b6d"/><rect x="527.00" y="988.54" width="9.90" height="26.40" fill="#61b98f"/><rect x="536.90" y="988.54" width="4.30" height="26.40" fill="#586b6d"/><rect x="527.00" y="1023.72" width="8.50" height="26.40" fill="#61b98f"/><rect x="535.50" y="1023.72" width="3.40" height="26.40" fill="#586b6d"/><rect x="527.00" y="1058.90" width="7.00" height="26.40" fill="#61b98f"/><rect x="534.00" y="1058.90" width="3.80" height="26.40" fill="#586b6d"/><rect x="527.00" y="1094.08" width="5.60" height="26.40" fill="#61b98f"/><rect x="532.60" y="1094.08" width="3.40" height="26.40" fill="#586b6d"/><rect x="527.00" y="1129.26" width="4.20" height="26.40" fill="#61b98f"/><rect x="531.20" y="1129.26" width="3.10" height="26.40" fill="#586b6d"/><rect x="527.00" y="1164.44" width="4.20" height="26.40" fill="#61b98f"/><rect x="531.20" y="1164.44" width="2.80" height="26.40" fill="#586b6d"/><rect x="1418.50" y="1192.50" width="47.70" height="13.30" fill="#61b98f"/><rect x="1418.50" y="1189.60" width="47.70" height="2.90" fill="#586b6d"/><rect x="1418.50" y="1182.40" width="47.70" height="7.20" fill="#7a9874"/><rect x="1479.00" y="901.20" width="47.70" height="304.60" fill="#61b98f"/><rect x="1479.00" y="870.70" width="47.70" height="30.50" fill="#586b6d"/><rect x="1479.00" y="863.90" width="47.70" height="6.80" fill="#7a9874"/><rect x="1539.50" y="824.40" width="47.70" height="381.40" fill="#61b98f"/><rect x="1539.50" y="784.80" width="47.70" height="39.60" fill="#586b6d"/><rect x="1539.50" y="775.30" width="47.70" height="9.50" fill="#7a9874"/><rect x="1600.00" y="783.20" width="47.70" height="422.60" fill="#61b98f"/><rect x="1600.00" y="735.80" width="47.70" height="47.40" fill="#586b6d"/><rect x="1600.00" y="727.30" width="47.70" height="8.50" fill="#7a9874"/><rect x="1660.50" y="909.20" width="47.70" height="296.60" fill="#61b98f"/><rect x="1660.50" y="876.70" width="47.70" height="32.50" fill="#586b6d"/><rect x="1660.50" y="868.50" width="47.70" height="8.20" fill="#7a9874"/><rect x="1721.00" y="932.00" width="47.70" height="273.80" fill="#61b98f"/><rect x="1721.00" y="856.30" width="47.70" height="75.70" fill="#586b6d"/><rect x="1721.00" y="850.30" width="47.70" height="6.00" fill="#7a9874"/><rect x="1781.50" y="878.10" width="47.70" height="327.70" fill="#61b98f"/><rect x="1781.50" y="829.80" width="47.70" height="48.30" fill="#586b6d"/><rect x="1781.50" y="816.20" width="47.70" height="13.60" fill="#7a9874"/><rect x="1842.00" y="916.40" width="47.70" height="289.40" fill="#61b98f"/><rect x="1842.00" y="878.90" width="47.70" height="37.50" fill="#586b6d"/><rect x="1842.00" y="867.20" width="47.70" height="11.70" fill="#7a9874"/><rect x="1902.50" y="1034.90" width="47.70" height="170.90" fill="#61b98f"/><rect x="1902.50" y="1011.80" width="47.70" height="23.10" fill="#586b6d"/><rect x="1902.50" y="1002.30" width="47.70" height="9.50" fill="#7a9874"/><rect x="1963.00" y="1203.00" width="47.70" height="2.80" fill="#61b98f"/><rect x="1963.00" y="1201.40" width="47.70" height="1.60" fill="#586b6d"/><rect x="1963.00" y="1201.20" width="47.70" height="0.20" fill="#7a9874"/><rect x="2023.50" y="1203.50" width="47.70" height="2.30" fill="#61b98f"/><rect x="2023.50" y="1201.80" width="47.70" height="1.70" fill="#586b6d"/><rect x="2023.50" y="1201.70" width="47.70" height="0.10" fill="#7a9874"/><rect x="2084.00" y="1205.30" width="47.70" height="0.50" fill="#61b98f"/><rect x="2084.00" y="1204.30" width="47.70" height="1.00" fill="#586b6d"/><rect x="2144.50" y="1204.50" width="47.70" height="1.30" fill="#61b98f"/><rect x="2265.50" y="1204.80" width="47.70" height="1.00" fill="#61b98f"/></svg>
<div class="r" style="left:2183px;top:585px;width:65.4px;height:65.4px;border-radius:50%;background:#fff;border:1px solid #e0e0e0;"></div>
<div class="r" style="left:2260.9px;top:585.4px;width:64.6px;height:64.6px;border-radius:50%;background:#fff;border:1px solid #e0e0e0;"></div>
<svg style="left:0;top:0" width="2512" height="1284" viewBox="0 0 2512 1284">
<path d="M2201.3 617 L2232 617 M2216.3 602.5 L2231.5 617 L2216.3 632.5" stroke="#333" stroke-width="2.8" fill="none"/>
<path d="M2281 606.3 L2281 630.5 L2306.8 630.5" stroke="#000" stroke-width="2.2" fill="none"/>
<rect x="2285.8" y="616.3" width="5.4" height="14.2" fill="#000"/>
<rect x="2293.2" y="610.9" width="6.2" height="19.6" fill="#000"/>
<rect x="2302.1" y="621.3" width="4.7" height="9.2" fill="#000"/>
</svg>
</body></html>
